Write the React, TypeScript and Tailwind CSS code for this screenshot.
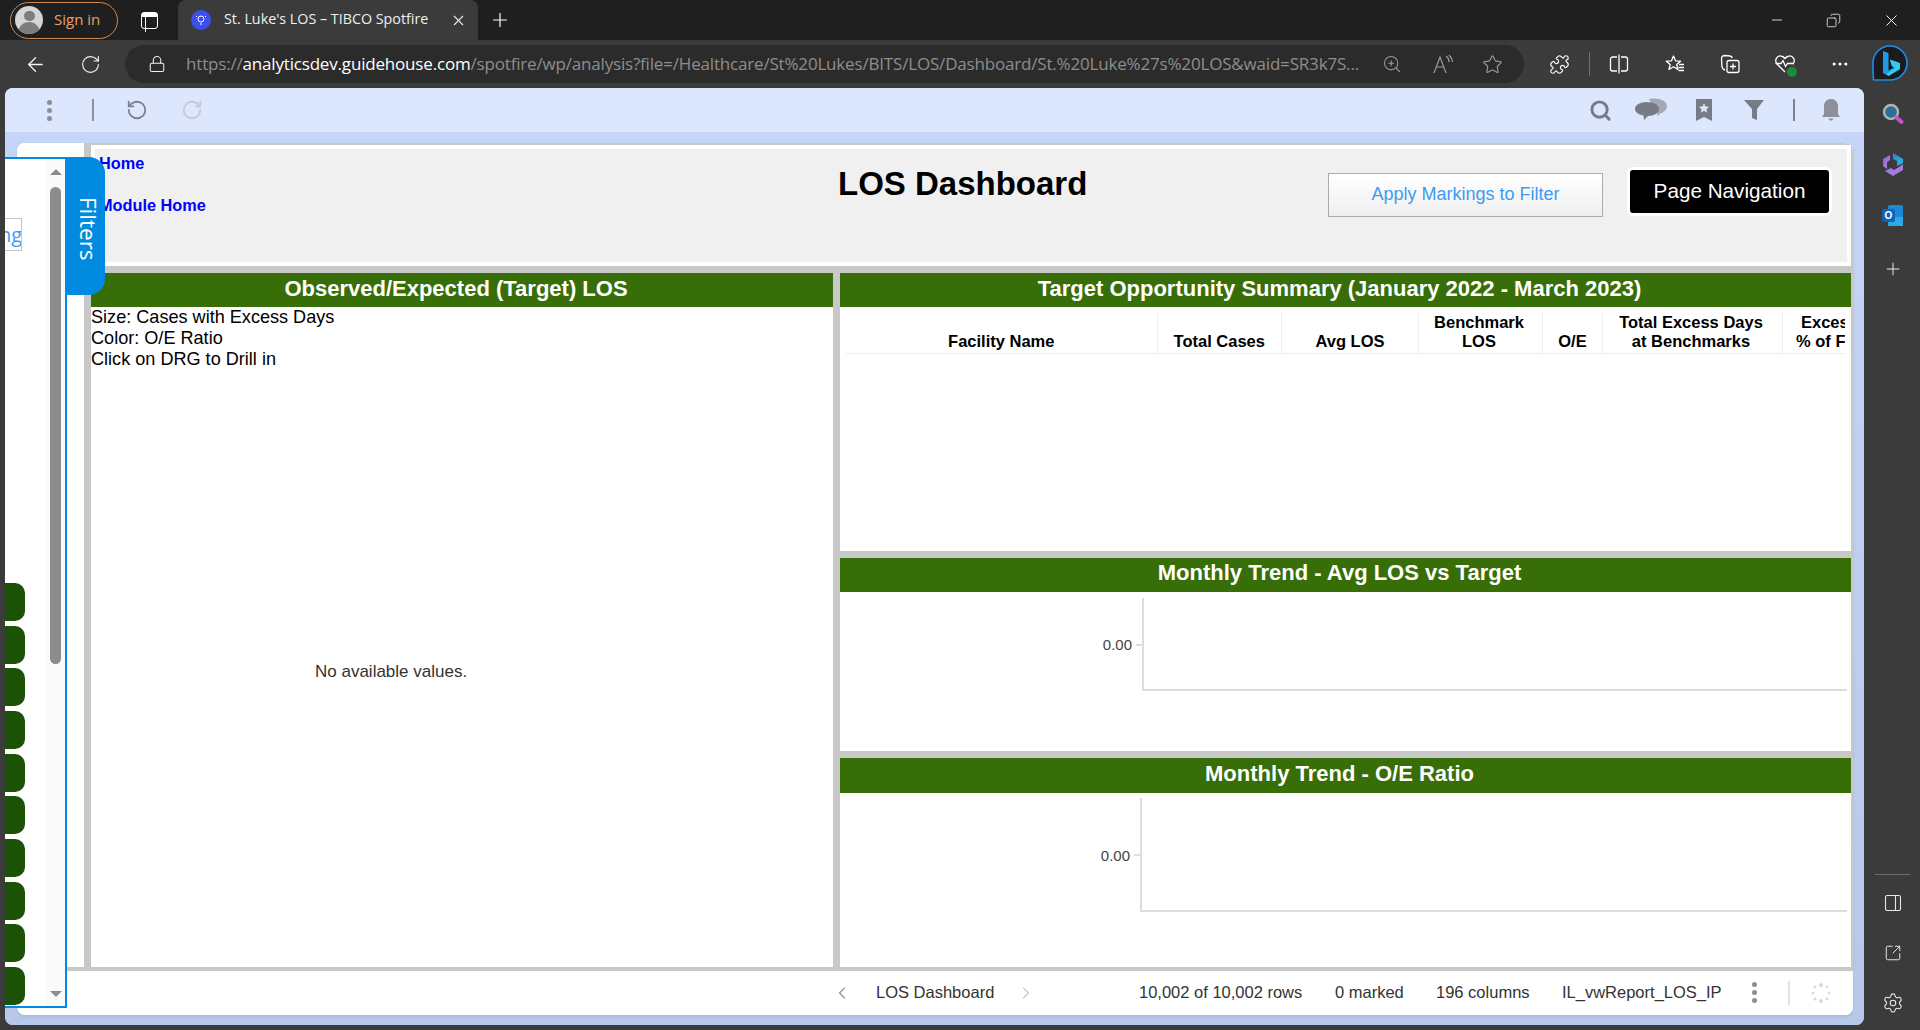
import React from "react";
import {
  ArrowLeft, RotateCw, Lock, ZoomIn, Star, Puzzle, Plus, X, Minus, Copy, Ellipsis, Settings,
  SquareArrowOutUpRight, PanelRight, Search, ChevronLeft, ChevronRight,
} from "lucide-react";

const Slot = ({ w, children, className = "" }: { w: string; children?: React.ReactNode; className?: string }) => (
  <div className={`flex items-center justify-center shrink-0 ${w} ${className}`}>{children}</div>
);

const BingLogo = () => (
  <svg width="40" height="40" viewBox="0 0 40 40">
    <path d="M20 2a17 17 0 1 1 0 34H4.500c-1.500 0-1.500-1-1-2.200C3 32 3 24 3 19A17 17 0 0 1 20 2z" fill="#1b1b1f" stroke="#1a8fe8" strokeWidth="1.6" />
    <path d="M13 7l5.500 2v17.500l6.500-3.600-3-1.500-2-5 10 3.600v5.400L18.500 32 13 29z" fill="#1e9be6" />
    <path d="M20 15.500l10 3.600v5.400L18.500 32l-2-2 8.500-6-3-1.500z" fill="#39c8e8" />
  </svg>
);
const Copilot = () => (
  <svg width="24" height="26" viewBox="0 0 24 26">
    <defs>
      <linearGradient id="cpA" x1="0" y1="0" x2="1" y2="1"><stop offset="0" stopColor="#2f7be0" /><stop offset="1" stopColor="#25c2d8" /></linearGradient>
      <linearGradient id="cpB" x1="0" y1="0" x2="1" y2="1"><stop offset="0" stopColor="#7a5fd8" /><stop offset="1" stopColor="#c88be0" /></linearGradient>
    </defs>
    <path d="M12 1l10 6v4l-6 3V9l-4-2z" fill="url(#cpA)" />
    <path d="M2 7l7-4v5L6 10v7l-4-3z" fill="url(#cpB)" />
    <path d="M22 12v6l-10 6-8-5 6-3 3 2 5-3z" fill="#a67be0" />
  </svg>
);
const Outlook = () => (
  <div className="relative w-[21px] h-[21px]">
    <div className="absolute right-0 top-0 w-[15px] h-[20px] bg-[#1a8ad6] rounded-[2px]" />
    <div className="absolute right-0 bottom-0 w-[15px] h-[9px] bg-[#2aa8e8]" />
    <div className="absolute left-0 top-[4px] w-[13px] h-[13px] bg-[#0f62b5] rounded-[2px] flex items-center justify-center text-white text-[10px] font-bold leading-none [font-family:'Liberation_Sans',sans-serif]">O</div>
  </div>
);
const SideSearch = () => (
  <svg width="24" height="24" viewBox="0 0 24 24">
    <circle cx="10" cy="10" r="7" fill="#2a6f96" stroke="#b3b3b3" strokeWidth="2.4" />
    <path d="M15.500 15.500l5 4.500" stroke="#c74fd8" strokeWidth="4" strokeLinecap="round" />
  </svg>
);
const FavStar = () => (
  <svg width="22" height="22" viewBox="0 0 22 22" fill="none" stroke="#fff" strokeWidth="1.3" strokeLinejoin="round">
    <path d="M9.500 3l2 4.800 5 .4-3.800 3.300 1.200 5-4.400-2.700L5 16.500l1.200-5L2.300 8.200l5.200-.4z" />
    <path d="M15 11.500h5M14.500 14.500h5.500M14.500 17.500h5.500" />
  </svg>
);
const Collections = () => (
  <svg width="22" height="22" viewBox="0 0 22 22" fill="none" stroke="#fff" strokeWidth="1.3">
    <path d="M6 17c-2-.5-2.500-1.500-3-3L2.500 6C2.400 3.500 4 2.500 6 2.500l5 .5c1.500.3 2 1 2.300 2" />
    <rect x="8" y="7.500" width="12" height="12" rx="2" />
    <path d="M14 10.500v6M11 13.500h6" />
  </svg>
);
const Health = () => (
  <div className="relative w-[22px] h-[22px]">
    <svg width="22" height="22" viewBox="0 0 22 22" fill="none" stroke="#fff" strokeWidth="1.3">
      <path d="M11 19L3 11C0 7 3 2.500 7 3c2 .2 3 1.300 4 2.500C12 4.300 13 3.200 15 3c4-.5 7 4 4 8" />
      <path d="M1.500 10.500H7l2 -3 2.500 6 2-3h6.500" />
    </svg>
    <div className="absolute right-[-1px] bottom-[-2px] w-[10px] h-[10px] rounded-full bg-[#1d8a3c]" />
  </div>
);
const ReadAloud = () => (
  <svg width="22" height="22" viewBox="0 0 22 22" fill="none" stroke="#9a9a9a" strokeWidth="1.2">
    <path d="M2 20L8 4l6 16M4.500 14h7M14 3c2 1.500 3 3.500 3 6M17 2c2 2 3.500 4 3.500 7" />
  </svg>
);
const Split = () => (
  <svg width="22" height="22" viewBox="0 0 22 22" fill="none" stroke="#fff" strokeWidth="1.3">
    <path d="M9 4H4.500A2 2 0 0 0 2.500 6v10a2 2 0 0 0 2 2H9M13 4h4.500a2 2 0 0 1 2 2v10a2 2 0 0 1-2 2H13M11 1.500v19" />
  </svg>
);
const Chat = () => (
  <svg width="34" height="24" viewBox="0 0 34 24">
    <path d="M15 1c8-2 18 1 18 7 0 3.500-3 6.500-7 7.500l-2 3-1-3z" fill="#a3a8b2" />
    <path d="M13 4c7 0 12 3 12 7s-5 7-11 7l-4 4-.5-4.500C4 16.500 1 14 1 11c0-4 5-7 12-7z" fill="#767b86" />
  </svg>
);
const Bookmark = () => (
  <svg width="20" height="24" viewBox="0 0 20 24">
    <path d="M2 1h16v22l-8-4-8 4z" fill="#767b86" />
    <path d="M10 5l1.500 3.500 3.700.3-2.800 2.400.9 3.600-3.300-2-3.300 2 .9-3.600-2.800-2.400 3.700-.3z" fill="#dce6fd" />
  </svg>
);
const Funnel = () => (
  <svg width="22" height="24" viewBox="0 0 22 24">
    <path d="M1 2h20l-7 9v11l-5-2v-9z" fill="#767b86" />
  </svg>
);
const Bell = () => (
  <svg width="22" height="24" viewBox="0 0 22 24">
    <path d="M11 1c4.500 0 7 3.500 7 7v8l2 3H2l2-3V8c0-3.500 2.500-7 7-7z" fill="#8b909b" />
    <path d="M8 20.500h6L11 23z" fill="#8b909b" />
  </svg>
);
const Dots = ({ className = "" }: { className?: string }) => (
  <div className={`flex flex-col gap-[3px] ${className}`}>
    <span className="w-[5px] h-[5px] rounded-full bg-[#8a8e96]" />
    <span className="w-[5px] h-[5px] rounded-full bg-[#8a8e96]" />
    <span className="w-[5px] h-[5px] rounded-full bg-[#8a8e96]" />
  </div>
);
const Spinner = () => (
  <svg width="22" height="22" viewBox="0 0 22 22" fill="#d9d9d9">
    <circle cx="11" cy="3" r="2" /><circle cx="17" cy="5" r="1.200" /><circle cx="19" cy="11" r="1.200" />
    <circle cx="17" cy="17" r="1.500" /><circle cx="11" cy="19" r="2" /><circle cx="5" cy="17" r="1.500" />
    <circle cx="3" cy="11" r="1.500" /><circle cx="5" cy="5" r="1.500" />
  </svg>
);

const PanelHead = ({ children, h = "h-[34px] leading-[32px]" }: { children: React.ReactNode; h?: string }) => (
  <div className={`${h} shrink-0 bg-[#386e07] text-white font-bold text-[22px] text-center whitespace-nowrap pr-[12px]`}>{children}</div>
);

const columns: { w: string; lines: string[] }[] = [
  { w: "w-[311.5px]", lines: ["Facility Name"] },
  { w: "w-[124.5px]", lines: ["Total Cases"] },
  { w: "w-[137px]", lines: ["Avg LOS"] },
  { w: "w-[124px] pr-[3px]", lines: ["Benchmark", "LOS"] },
  { w: "w-[60px]", lines: ["O/E"] },
  { w: "w-[180px] pr-[3px]", lines: ["Total Excess Days", "at Benchmarks"] },
];

const Chart = ({ h, label, mt = "mt-[5px]" }: { h: string; label: string; mt?: string }) => (
  <div className={`flex ${h} ${mt} pr-[4px]`}>
    <div className={`flex items-center justify-end gap-[4px] shrink-0 ${label}`}>
      <span className="text-[15px] leading-none text-[#444]">0.00</span>
      <span className="w-[7px] h-[2px] bg-[#dcdcdc] mr-[-1px]" />
    </div>
    <div className="flex-1 border-l-2 border-b-2 border-[#dcdcdc]" />
  </div>
);

export default function App() {
  return (
    <div className="w-[1920px] h-[1030px] flex flex-col bg-[#3b3b3b] overflow-hidden [font-family:'Liberation_Sans',Arial,sans-serif]">
      {/* Title bar */}
      <div className="h-[40px] shrink-0 bg-[#1f1f1f] flex items-center [font-family:'Open_Sans',sans-serif]">
        <div className="ml-[10px] w-[108px] h-[37px] rounded-full border border-[#d08a55] flex items-center shrink-0">
          <div className="ml-[4px] w-[28px] h-[28px] rounded-full bg-[#d5d5d5] overflow-hidden flex flex-col items-center">
            <span className="mt-[5px] w-[11px] h-[11px] rounded-full bg-[#7d7d7d]" />
            <span className="mt-[1px] w-[22px] h-[14px] rounded-t-full bg-[#7d7d7d]" />
          </div>
          <span className="ml-[11px] pb-[2px] text-[15px] text-[#e8a06a] whitespace-nowrap">Sign in</span>
        </div>
        <div className="ml-[23px] w-[17px] h-[17px] border-[1.5px] border-white rounded-[3px] shrink-0 relative">
          <div className="h-[4px] bg-white" />
          <div className="h-full w-[4px] border-r border-white" />
        </div>
        <div className="ml-[20px] w-[300px] h-[40px] bg-[#3b3b3b] rounded-t-lg flex items-center shrink-0">
          <div className="ml-[13px] w-[20px] h-[20px] rounded-full bg-[#3d4df0] flex items-center justify-center">
            <svg width="12" height="12" viewBox="0 0 12 12" fill="none" stroke="#fff" strokeWidth="1"><circle cx="6" cy="5" r="3" /><path d="M5 10h2M1 2l1 1M11 2l-1 1" /></svg>
          </div>
          <span className="ml-[13px] pb-[2px] text-[14.3px] text-[#f0f0f0] whitespace-nowrap w-[226px]">St. Luke's LOS – TIBCO Spotfire</span>
          <X size={17} color="#e8e8e8" strokeWidth={1.5} />
        </div>
        <Plus size={22} color="#fff" strokeWidth={1.3} className="ml-[11px] shrink-0" />
        <div className="flex-1" />
        <Minus size={16} color="#fff" strokeWidth={1.2} />
        <Copy size={15} color="#fff" strokeWidth={1.2} className="ml-[41px] -scale-x-100" />
        <X size={19} color="#fff" strokeWidth={1.2} className="ml-[41px] mr-[19px]" />
      </div>

      {/* Address bar */}
      <div className="h-[48px] shrink-0 flex items-center bg-[#3b3b3b] [font-family:'Open_Sans',sans-serif]">
        <Slot w="w-[70px]"><ArrowLeft size={23} color="#f2f2f2" strokeWidth={1.4} /></Slot>
        <Slot w="w-[40px]"><RotateCw size={21} color="#f2f2f2" strokeWidth={1.3} /></Slot>
        <div className="ml-[15px] w-[1399px] h-[38px] rounded-full bg-[#2b2b2b] flex items-center shrink-0">
          <Slot w="w-[61px]" className="pl-[2px]"><Lock size={18} color="#eee" strokeWidth={1.4} /></Slot>
          <div className="w-[1176px] overflow-hidden text-[17px] tracking-[-0.18px] text-[#8e8e8e] whitespace-nowrap">
            https://<span className="text-white">analyticsdev.guidehouse.com</span>/spotfire/wp/analysis?file=/Healthcare/St%20Lukes/BITS/LOS/Dashboard/St.%20Luke%27s%20LOS&amp;waid=SR3k7S...
          </div>
          <Slot w="w-[34px]" className="ml-[13px]"><ZoomIn size={20} color="#9a9a9a" strokeWidth={1.3} /></Slot>
          <Slot w="w-[34px]" className="ml-[17px]"><ReadAloud /></Slot>
          <Slot w="w-[34px]" className="ml-[15px]"><Star size={21} color="#9a9a9a" strokeWidth={1.3} /></Slot>
        </div>
        <Slot w="w-[40px]" className="ml-[15px]"><Puzzle size={21} color="#fff" strokeWidth={1.3} /></Slot>
        <div className="ml-[10px] w-px h-[24px] bg-[#6e6e6e]" />
        <Slot w="w-[40px]" className="ml-[9px]"><Split /></Slot>
        <Slot w="w-[40px]" className="ml-[16px]"><FavStar /></Slot>
        <Slot w="w-[40px]" className="ml-[15px]"><Collections /></Slot>
        <Slot w="w-[40px]" className="ml-[15px]"><Health /></Slot>
        <Slot w="w-[40px]" className="ml-[15px]"><Ellipsis size={20} color="#fff" strokeWidth={1.8} /></Slot>
        <Slot w="w-[40px]" className="ml-[10px]"><BingLogo /></Slot>
      </div>

      {/* Body */}
      <div className="flex-1 min-h-0 flex">
        <div className="relative ml-[5px] mb-[5px] w-[1859px] shrink-0 flex flex-col rounded-lg overflow-hidden bg-[#c5d5f7]">
          {/* Spotfire toolbar */}
          <div className="h-[44px] shrink-0 bg-[#dce6fd] flex items-center">
            <Slot w="w-[20px]" className="ml-[34px]"><Dots /></Slot>
            <div className="ml-[33px] w-[2px] h-[22px] bg-[#8d929c]" />
            <Slot w="w-[28px]" className="ml-[29px]"><RotateCw size={22} color="#7d828c" strokeWidth={2} className="-scale-x-100" /></Slot>
            <Slot w="w-[28px]" className="ml-[27px]"><RotateCw size={22} color="#c3c9d4" strokeWidth={2} /></Slot>
            <div className="flex-1" />
            <Slot w="w-[28px]"><Search size={23} color="#767b86" strokeWidth={3} /></Slot>
            <Slot w="w-[38px]" className="ml-[18px]"><Chat /></Slot>
            <Slot w="w-[24px]" className="ml-[22px]"><Bookmark /></Slot>
            <Slot w="w-[26px]" className="ml-[25px]"><Funnel /></Slot>
            <div className="ml-[26px] w-[2px] h-[22px] bg-[#7d828c]" />
            <Slot w="w-[26px]" className="ml-[23px] mr-[20px]"><Bell /></Slot>
          </div>

          {/* Workspace */}
          <div className="flex-1 min-h-0 pt-[11px] pl-[12px] pr-[11px] pb-[10px] bg-gradient-to-b from-[#c5d5f7] to-[#b7c8ea]">
            <div className="h-full bg-white rounded-lg overflow-hidden flex flex-col shadow-[0_2px_3px_#a8bade]">
              <div className="flex-1 min-h-0 flex">
                <div className="w-[67px] shrink-0 bg-white" />
                <div className="flex-1 min-w-0 bg-[#c8c8c8] pl-[7px] pr-[2px] pt-[2px] flex flex-col gap-[7px]">
                  {/* Header */}
                  <div className="h-[121px] shrink-0 bg-white p-[4px]">
                    <div className="h-full bg-[#f0f0f0] flex">
                      <div className="w-[200px] shrink-0 pl-[4px] pt-[5px] flex flex-col gap-[24px] text-[16.3px] leading-[18px] font-bold text-[#0000ff] whitespace-nowrap">
                        <span>Home</span>
                        <span>Module Home</span>
                      </div>
                      <div className="ml-[543px] w-[250px] shrink-0 pt-[16px] text-[33px] leading-[38px] font-bold text-black whitespace-nowrap">LOS Dashboard</div>
                      <div className="ml-[240px] mt-[24px] w-[275px] h-[44px] shrink-0 flex items-center justify-center pb-[2px] bg-gradient-to-b from-white to-[#efefef] border border-[#aaaaaa] text-[18px] text-[#3d9bf3]">Apply Markings to Filter</div>
                      <div className="ml-[24px] mt-[18px] w-[205px] h-[49px] shrink-0 flex items-center justify-center pb-[2px] bg-black border-[3px] border-white rounded-[6px] text-white text-[20.7px]">Page Navigation</div>
                    </div>
                  </div>
                  {/* Panels */}
                  <div className="flex-1 min-h-0 flex gap-[7px]">
                    <div className="w-[742px] shrink-0 bg-white flex flex-col">
                      <PanelHead>Observed/Expected (Target) LOS</PanelHead>
                      <div className="text-[18.1px] leading-[21px] text-black">
                        <div>Size: Cases with Excess Days</div>
                        <div>Color: O/E Ratio</div>
                        <div>Click on DRG to Drill in</div>
                      </div>
                      <div className="mt-[293px] ml-[224px] text-[17px] leading-[18px] text-[#333]">No available values.</div>
                    </div>
                    <div className="flex-1 min-w-0 flex flex-col gap-[7px]">
                      <div className="h-[278px] shrink-0 bg-white flex flex-col">
                        <PanelHead>Target Opportunity Summary (January 2022 - March 2023)</PanelHead>
                        <div className="mt-[6px] ml-[6px] mr-[6px] h-[41px] flex border-b border-[#eeeeee] overflow-hidden text-[16.5px] leading-[19px] font-bold text-black">
                          {columns.map((c) => (
                            <div key={c.lines[0]} className={`${c.w} shrink-0 border-r border-[#eeeeee] flex flex-col justify-end items-center pb-[2px] whitespace-nowrap`}>
                              {c.lines.map((l) => <span key={l}>{l}</span>)}
                            </div>
                          ))}
                          <div className="flex-1 min-w-0 pl-[18px] flex flex-col justify-end pb-[2px] whitespace-nowrap overflow-hidden">
                            <span>Excess</span>
                            <span className="-ml-[5px]">% of Facility</span>
                          </div>
                        </div>
                      </div>
                      <div className="h-[193px] shrink-0 bg-white flex flex-col">
                        <PanelHead h="h-[34px] leading-[30px]">Monthly Trend - Avg LOS vs Target</PanelHead>
                        <Chart h="h-[93px]" mt="mt-[6px]" label="w-[302px]" />
                      </div>
                      <div className="flex-1 min-h-0 bg-white flex flex-col">
                        <PanelHead h="h-[35px] leading-[32px]">Monthly Trend - O/E Ratio</PanelHead>
                        <Chart h="h-[114px]" label="w-[300px]" />
                      </div>
                    </div>
                  </div>
                </div>
              </div>
              {/* Status bar */}
              <div className="ml-[50px] h-[48px] shrink-0 border-t-4 border-[#c8c8c8] bg-white flex items-center pb-[1px] text-[16.5px] text-[#333] whitespace-nowrap">
                <Slot w="w-[20px]" className="ml-[765px]"><ChevronLeft size={20} color="#8a8e96" strokeWidth={1.3} /></Slot>
                <span className="ml-[24px] w-[130px] shrink-0">LOS Dashboard</span>
                <Slot w="w-[20px]" className="ml-[10px]"><ChevronRight size={20} color="#c4c6ca" strokeWidth={1.3} /></Slot>
                <span className="ml-[103px] w-[196px] shrink-0">10,002 of 10,002 rows</span>
                <span className="w-[101px] shrink-0">0 marked</span>
                <span className="w-[126px] shrink-0">196 columns</span>
                <span className="w-[188px] shrink-0">IL_vwReport_LOS_IP</span>
                <Dots className="ml-[2px]" />
                <div className="ml-[31px] w-[2px] h-[24px] bg-[#e2e2e2]" />
                <Slot w="w-[22px]" className="ml-[20px]"><Spinner /></Slot>
              </div>
            </div>
          </div>

          {/* Filter flyout */}
          <div className="absolute left-0 top-[69px] w-[62px] h-[851px] bg-white border-t-2 border-r-2 border-b-2 border-[#008ae0] flex">
            <div className="w-[41px] shrink-0 flex flex-col items-start">
              <div className="mt-[59px] w-[17px] h-[33px] bg-white border border-l-0 border-[#c4c4c4] flex items-center justify-end overflow-hidden text-[#3d9bf3] text-[20px] [font-family:'Open_Sans',sans-serif]">
                <span className="translate-x-[1px]">ng</span>
              </div>
              <div className="mt-[332px] flex flex-col gap-[4.67px]">
                {[0, 1, 2, 3, 4, 5, 6, 7, 8, 9].map((i) => (
                  <div key={i} className="w-[20px] h-[38px] rounded-r-[10px] bg-[#1c5206]" />
                ))}
              </div>
            </div>
            <div className="flex-1 bg-[#fafafa] flex flex-col items-center">
              <div className="mt-[10px] w-0 h-0 border-l-[6px] border-r-[6px] border-b-[6px] border-l-transparent border-r-transparent border-b-[#8c8c8c]" />
              <div className="mt-[12px] w-[11px] h-[477px] rounded-full bg-[#8c8c8c]" />
              <div className="mt-auto mb-[9px] w-0 h-0 border-l-[6px] border-r-[6px] border-t-[6px] border-l-transparent border-r-transparent border-t-[#8c8c8c]" />
            </div>
          </div>
          <div className="absolute left-[60px] top-[69px] w-[40px] h-[138px] pl-[6px] pt-[5px] bg-[#008ae0] rounded-r-[16px] flex items-center justify-center text-white text-[22.5px] [font-family:'Open_Sans',sans-serif] [writing-mode:vertical-rl]">Filters</div>
        </div>

        {/* Edge sidebar */}
        <div className="flex-1 flex flex-col items-center pl-[1px] pb-[2px]">
          <Slot w="w-full" className="h-[51px]"><SideSearch /></Slot>
          <Slot w="w-full" className="h-[51px]"><Copilot /></Slot>
          <Slot w="w-full" className="h-[51px]"><Outlook /></Slot>
          <Slot w="w-full" className="h-[55px]"><Plus size={20} color="#e8e8e8" strokeWidth={1.2} /></Slot>
          <div className="mt-auto w-[35px] h-px bg-[#6e6e6e] mb-[2px]" />
          <Slot w="w-full" className="h-[51px]"><PanelRight size={20} color="#e8e8e8" strokeWidth={1.3} /></Slot>
          <Slot w="w-full" className="h-[50px]"><SquareArrowOutUpRight size={18} color="#e8e8e8" strokeWidth={1.3} /></Slot>
          <Slot w="w-full" className="h-[50px]"><Settings size={22} color="#e8e8e8" strokeWidth={1.2} /></Slot>
        </div>
      </div>
    </div>
  );
}
